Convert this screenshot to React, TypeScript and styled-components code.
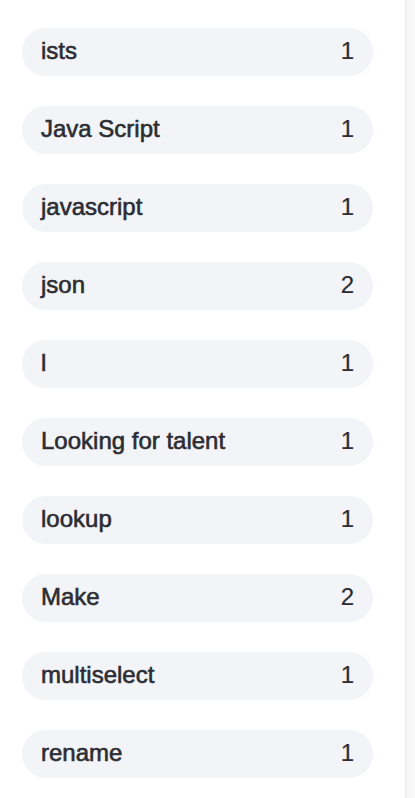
import React from "react";
import styled, { createGlobalStyle } from "styled-components";

const GlobalStyle = createGlobalStyle`
  html, body {
    margin: 0;
    padding: 0;
    background: #ffffff;
    font-family: "Liberation Sans", Arial, sans-serif;
  }
`;

interface ITag {
  name: string;
  count: number;
}

const tags: ITag[] = [
  { name: "ists", count: 1 },
  { name: "Java Script", count: 1 },
  { name: "javascript", count: 1 },
  { name: "json", count: 2 },
  { name: "l", count: 1 },
  { name: "Looking for talent", count: 1 },
  { name: "lookup", count: 1 },
  { name: "Make", count: 2 },
  { name: "multiselect", count: 1 },
  { name: "rename", count: 1 },
];

const Page = styled.div`
  display: flex;
  width: 415px;
  height: 798px;
  overflow: hidden;
`;

const TagList = styled.ul`
  list-style: none;
  margin: 0;
  padding: 28px 0 0 22px;
  width: 351px;
  display: flex;
  flex-direction: column;
  gap: 30px;
`;

const TagRow = styled.li`
  display: flex;
  align-items: center;
  justify-content: space-between;
  height: 48px;
  padding: 0 19px 3px;
  box-sizing: border-box;
  border-radius: 24px;
  background: #f3f4f7;
  color: #2b2d33;
  font-size: 24px;
  line-height: 28px;
`;

const TagName = styled.span`
  font-weight: 400;
  -webkit-text-stroke: 0.6px #2b2d33;
`;

const TagCount = styled.span`
  font-weight: 400;
  -webkit-text-stroke: 0.2px #2b2d33;
`;

const Spacer = styled.div`
  flex: 1;
`;

const Gutter = styled.div`
  width: 9px;
  border-left: 1px solid #e9eaec;
  background: linear-gradient(to right, #f4f5f6, #fbfbfc);
`;

export default function App() {
  return <Page>
    <GlobalStyle />
    <TagList>
      {tags.map((tag: ITag, idx: number) => (
        <TagRow key={"tag-" + idx}>
          <TagName>{tag.name}</TagName>
          <TagCount>{tag.count}</TagCount>
        </TagRow>
      ))}
    </TagList>
    <Spacer />
    <Gutter />
  </Page>;
}
